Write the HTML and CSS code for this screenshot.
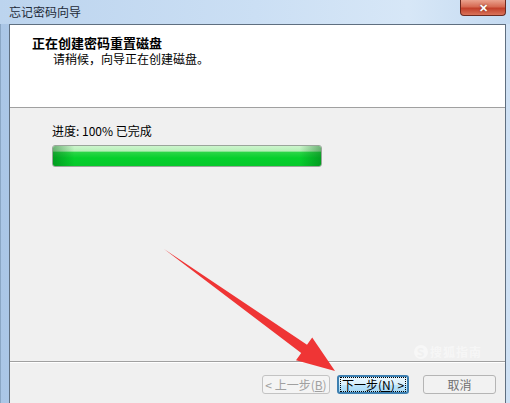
FILE: index.html
```html
<!DOCTYPE html>
<html lang="zh-CN">
<head>
  <meta charset="UTF-8">
  <title>忘记密码向导</title>
  <link rel="stylesheet" href="styles.css">
</head>
<body>

  <div class="window">
    <div class="titlebar">
      <span class="title">忘记密码向导</span>
      <span class="close">&#x2715;</span>
    </div>
    <div class="frame">
      <div class="client">
        <div class="header">
          <div class="heading">正在创建密码重置磁盘</div>
          <div class="subheading">请稍候，向导正在创建磁盘。</div>
        </div>
        <div class="content">
          <div class="progress-label">进度: 100% 已完成</div>
          <div class="progress"><div class="progress-fill"></div></div>
        </div>
        <div class="footer">
          <button class="btn disabled">&lt; 上一步(<u>B</u>)</button>
          <button class="btn default"><span class="focus">下一步(<u>N</u>) &gt;</span></button>
          <button class="btn cancel">取消</button>
        </div>
      </div>
    </div>

    <div class="watermark"><span class="wm-logo">S</span>搜狐指南</div>

    <svg class="arrow" width="510" height="403" viewBox="0 0 510 403">
      <polygon points="164,249 307,344.8 312.2,337.5 335,371 296,360.3 301.2,353" fill="#ef3535"/>
    </svg>
  </div>

</body>
</html>
```

FILE: styles.css
```css
html, body {
  margin: 0;
  padding: 0;
}
body {
  width: 510px;
  height: 403px;
  overflow: hidden;
  font-family: "Noto Sans CJK SC", "Liberation Sans", sans-serif;
  font-size: 12px;
  color: #000;
}
.window {
  position: relative;
  width: 510px;
  height: 403px;
  display: flex;
  flex-direction: column;
  background: linear-gradient(to right, #aac6e6, #c3d9f0 40%, #cfe1f4);
}
.titlebar {
  height: 24px;
  display: flex;
  justify-content: space-between;
  align-items: flex-start;
  background: linear-gradient(to right, #bcd4ee, #cbdff4 50%, #d7e7f7 80%, #c4daf1);
}
.title {
  margin: 4px 0 0 9px;
  line-height: 16px;
  color: #1e2a38;
}
.close {
  width: 44px;
  height: 15px;
  margin-right: 4px;
  border: 1px solid #6b2a20;
  border-top: none;
  border-radius: 0 0 4px 4px;
  background: linear-gradient(#eaa28e, #d66a52 45%, #c2402a 55%, #d9735a);
  color: #fff;
  font-size: 11px;
  font-weight: bold;
  line-height: 14px;
  text-align: center;
  text-shadow: 0 0 2px #6b2a20;
}
.frame {
  flex: 1;
  display: flex;
  padding: 0 4px 0 8px;
  border-left: 1px solid #8aa6c4;
}
.client {
  flex: 1;
  display: flex;
  flex-direction: column;
  border: 1px solid #5f6f80;
  border-bottom: none;
  background: #f0f0f0;
}
.header {
  height: 83px;
  background: #fff;
  border-bottom: 1px solid #a0a0a0;
  padding: 9px 0 0 22px;
  box-sizing: border-box;
}
.heading {
  font-size: 13px;
  font-weight: bold;
  line-height: 17px;
}
.subheading {
  margin-left: 21px;
  line-height: 16px;
}
.content {
  flex: 1;
  padding: 15px 0 0 42px;
  border-bottom: 1px solid #a0a0a0;
  box-shadow: 0 1px 0 #fff;
}
.progress-label {
  line-height: 16px;
  height: 16px;
  margin-bottom: 6px;
}
.progress {
  width: 270px;
  height: 22px;
  box-sizing: border-box;
  border: 1px solid #9aa59a;
  border-radius: 3px;
  background: #e6e6e6;
  overflow: hidden;
}
.progress-fill {
  height: 100%;
  background:
    linear-gradient(to right, rgba(0, 100, 20, 0.45), rgba(0, 100, 20, 0) 8%, rgba(0, 100, 20, 0) 92%, rgba(0, 100, 20, 0.45)),
    linear-gradient(#cdf5cd, #b6f0b8 25%, #2bd547 32%, #05d02c 60%, #07c92b);
}
.footer {
  height: 41px;
  display: flex;
  align-items: flex-start;
  justify-content: flex-end;
  padding: 13px 9px 0 0;
  box-sizing: border-box;
}
.btn {
  height: 19px;
  padding: 0;
  margin: 0;
  font-family: inherit;
  font-size: 12px;
  line-height: 15px;
  border: 1px solid #adadad;
  border-radius: 3px;
  background: linear-gradient(#f6f6f6, #ebebeb 50%, #dddddd 51%, #d4d4d4);
  color: #000;
}
.btn.disabled {
  width: 68px;
  border-color: #c3c3c3;
  background: #f4f4f4;
  color: #a0a0a0;
}
.btn.default {
  width: 72px;
  margin-left: 7px;
  border: 2px solid #3d7fb0;
  background: linear-gradient(#eaf6fd, #d9f0fc 50%, #bee6fd 51%, #a7d9f5);
}
.btn.default .focus {
  display: block;
  margin: 0 1px;
  border: 1px dotted #000;
  line-height: 13px;
}
.btn.cancel {
  width: 73px;
  margin-left: 14px;
  border-color: #b5b5b5;
  background: #f2f2f2;
  color: #707070;
}
.watermark {
  position: absolute;
  left: 414px;
  top: 343px;
  font-size: 12px;
  color: rgba(255, 255, 255, 0.45);
  font-weight: bold;
  letter-spacing: 1px;
}
.wm-logo {
  display: inline-block;
  width: 14px;
  height: 14px;
  margin-right: 2px;
  border-radius: 50%;
  background: rgba(255, 255, 255, 0.45);
  color: #f0f0f0;
  text-align: center;
  line-height: 14px;
}
.arrow {
  position: absolute;
  left: 0;
  top: 0;
  pointer-events: none;
}
```
